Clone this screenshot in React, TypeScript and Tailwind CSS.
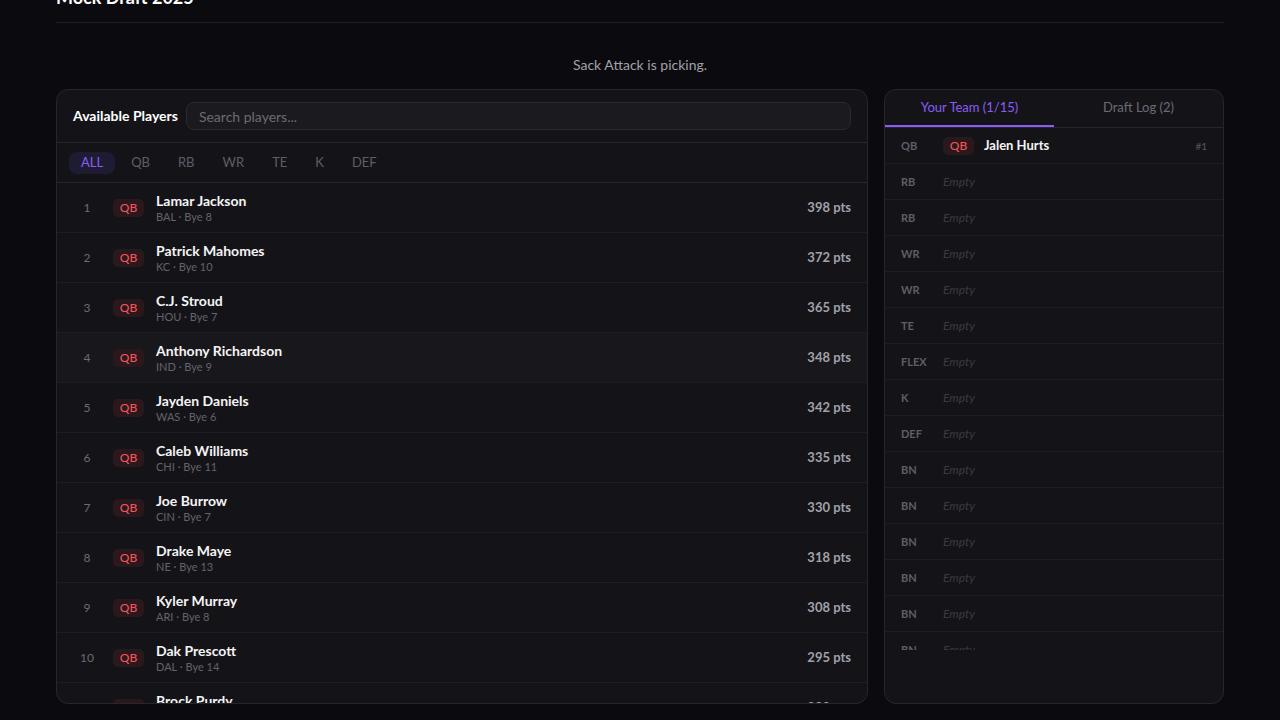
import { useState } from "react";

// --- DATOS DE EJEMPLO ---
const players = [
  { name: "Lamar Jackson", team: "BAL", bye: 8, pts: 398 },
  { name: "Patrick Mahomes", team: "KC", bye: 10, pts: 372 },
  { name: "C.J. Stroud", team: "HOU", bye: 7, pts: 365 },
  { name: "Anthony Richardson", team: "IND", bye: 9, pts: 348 },
  { name: "Jayden Daniels", team: "WAS", bye: 6, pts: 342 },
  { name: "Caleb Williams", team: "CHI", bye: 11, pts: 335 },
  { name: "Joe Burrow", team: "CIN", bye: 7, pts: 330 },
  { name: "Drake Maye", team: "NE", bye: 13, pts: 318 },
  { name: "Kyler Murray", team: "ARI", bye: 8, pts: 308 },
  { name: "Dak Prescott", team: "DAL", bye: 14, pts: 295 },
  { name: "Brock Purdy", team: "SF", bye: 9, pts: 290 },
  { name: "Jordan Love", team: "GB", bye: 10, pts: 286 },
];

const filters = ["ALL", "QB", "RB", "WR", "TE", "K", "DEF"];

const slots = ["QB", "RB", "RB", "WR", "WR", "TE", "FLEX", "K", "DEF", "BN", "BN", "BN", "BN", "BN", "BN"];

function PosBadge({ pos }: { pos: string }) {
  return (
    <span className="w-[31px] h-[18px] shrink-0 flex items-center justify-center rounded-[5px] bg-[#2a181c] text-[#f0555b] text-[12px] font-medium">
      {pos}
    </span>
  );
}

export default function App() {
  const [filter, setFilter] = useState("ALL");
  const [tab, setTab] = useState("team");

  return (
    <div className="h-screen overflow-hidden bg-[#0b0b0f] text-white" style={{ fontFamily: "Lato, 'Noto Sans', sans-serif" }}>
      <div className="px-14 -mt-[17px]">
        {/* ENCABEZADO */}
        <header className="pb-[11px] border-b border-[#1f1f24]">
          <h1 className="text-lg font-bold leading-7">Mock Draft 2025</h1>
        </header>

        <p className="mt-8 text-sm leading-5 text-center text-[#a1a1aa]">Sack Attack is picking.</p>

        <div className="mt-[14px] grid grid-cols-[1fr_340px] gap-4">
          {/* --- JUGADORES DISPONIBLES --- */}
          <section className="h-[615px] flex flex-col rounded-xl border border-[#26262c] bg-[#141418] overflow-hidden">
            <div className="flex items-center gap-2 px-4 py-3 border-b border-[#26262c]">
              <h2 className="text-sm font-bold whitespace-nowrap">Available Players</h2>
              <input
                type="text"
                placeholder="Search players..."
                className="flex-1 h-7 px-3 rounded-lg bg-[#1b1b1f] border border-[#2a2a30] text-sm text-white placeholder-[#6b6b74] focus:outline-none"
              />
            </div>

            <div className="flex items-center gap-1 px-3 pt-[9px] pb-2 border-b border-[#26262c]">
              {filters.map((f) => (
                <button
                  key={f}
                  onClick={() => setFilter(f)}
                  className={
                    f === filter
                      ? "h-[22px] px-3 rounded-lg bg-[#1e1c33] text-[#8b5cf6] text-[13px]"
                      : "h-[22px] px-3 rounded-lg text-[#5e5e66] text-[13px]"
                  }
                >
                  {f}
                </button>
              ))}
            </div>

            <div className="flex-1 overflow-hidden">
              {players.map((p, i) => (
                <div
                  key={p.name}
                  className={
                    "h-[50px] flex items-center gap-3 px-4 pt-px border-b border-[#1d1d22] " +
                    (i === 3 ? "bg-[#18181c]" : "")
                  }
                >
                  <span className="w-7 text-center text-[12px] text-[#6b6b74]">{i + 1}</span>
                  <PosBadge pos="QB" />
                  <div className="flex-1 flex flex-col mt-[2px]">
                    <span className="text-sm leading-4 font-bold text-[#f4f4f5]">{p.name}</span>
                    <span className="text-[11px] leading-4 text-[#63636b]">
                      {p.team} · Bye {p.bye}
                    </span>
                  </div>
                  <span className="text-[13px] font-bold text-[#a1a1aa]">{p.pts} pts</span>
                </div>
              ))}
            </div>
          </section>

          {/* --- MI EQUIPO / REGISTRO --- */}
          <aside className="h-[615px] flex flex-col rounded-xl border border-[#26262c] bg-[#141418] overflow-hidden">
            <div className="flex border-b border-[#26262c]">
              <button
                onClick={() => setTab("team")}
                className={
                  "flex-1 h-[37px] pt-px text-[13px] border-b-2 " +
                  (tab === "team" ? "text-[#8b5cf6] border-[#8b5cf6]" : "text-[#6b6b74] border-transparent")
                }
              >
                Your Team (1/15)
              </button>
              <button
                onClick={() => setTab("log")}
                className={
                  "flex-1 h-[37px] pt-px text-[13px] border-b-2 " +
                  (tab === "log" ? "text-[#8b5cf6] border-[#8b5cf6]" : "text-[#6b6b74] border-transparent")
                }
              >
                Draft Log (2)
              </button>
            </div>

            <div className="h-[522px] overflow-hidden">
              {slots.map((s, i) => (
                <div key={i} className="h-9 flex items-center gap-2.5 px-4 pt-px border-b border-[#1d1d22]">
                  <span className="w-8 text-[11px] font-bold text-[#5e5e66]">{s}</span>
                  {i === 0 ? (
                    <>
                      <PosBadge pos="QB" />
                      <span className="flex-1 text-[13px] font-bold text-[#f4f4f5]">Jalen Hurts</span>
                      <span className="text-[10px] text-[#56565e]">#1</span>
                    </>
                  ) : (
                    <span className="text-[12px] italic text-[#3a3a42]">Empty</span>
                  )}
                </div>
              ))}
            </div>
          </aside>
        </div>
      </div>
    </div>
  );
}
